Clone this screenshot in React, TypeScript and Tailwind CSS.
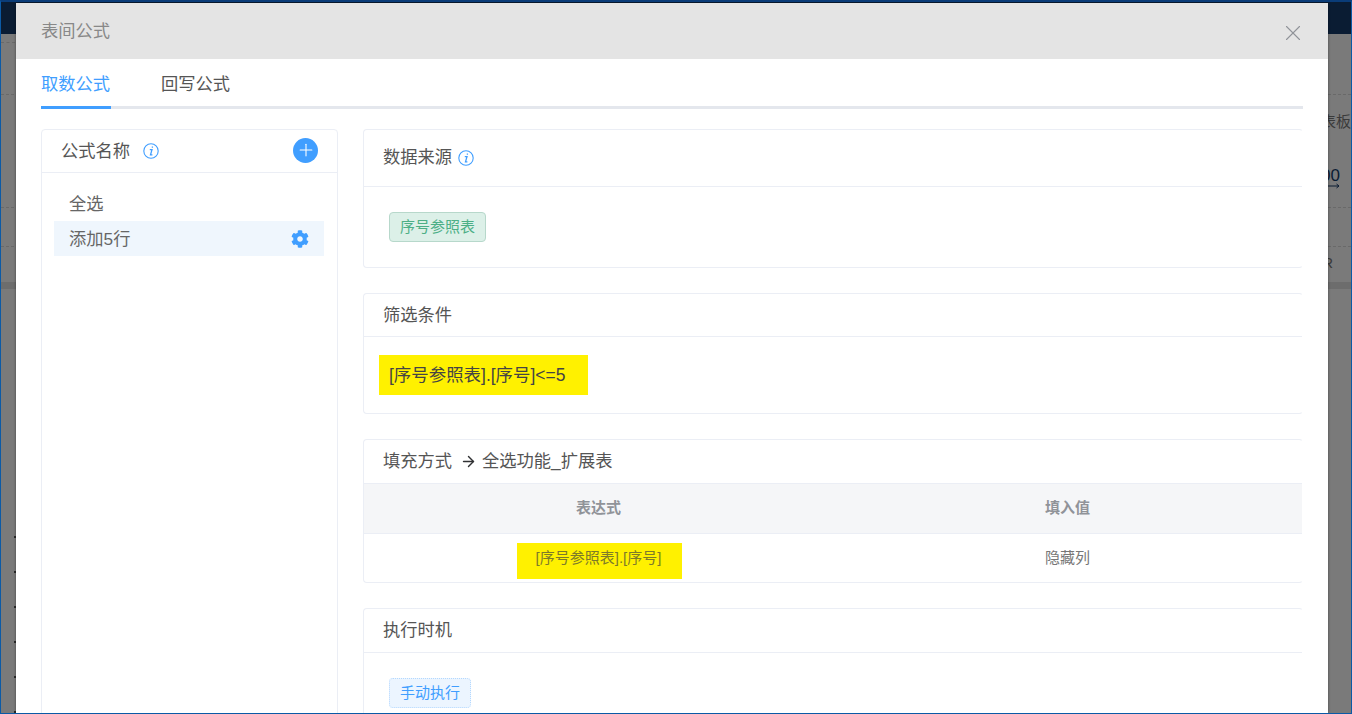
import { ArrowRight, Plus, X } from "lucide-react"
import { FaCog } from "react-icons/fa"

const font = "font-['Liberation_Sans','Noto_Sans_CJK_SC',sans-serif]"

function InfoIcon({ size = 16 }: { size?: number }) {
  return (
    <svg width={size} height={size} viewBox="0 0 16 16" fill="none" stroke="#409eff">
      <circle cx="8" cy="8" r="7.2" strokeWidth="1.1" />
      <path d="M9.4 3.4v1.4M6.8 6.6h2.2l-1.5 5.2h1.9" strokeWidth="1.3" />
    </svg>
  )
}

function Card({ title, children }: { title: React.ReactNode; children: React.ReactNode }) {
  return (
    <div className="rounded-[4px] border border-[#ebeef5] border-r-transparent bg-white">
      {title}
      {children}
    </div>
  )
}

export default function App() {
  return (
    <div className={`relative h-screen w-full overflow-hidden border-x border-b border-t-2 border-x-[#0b5aa6] border-b-[#0b5aa6] border-t-[#0a3c78] bg-[#7a7a7a] ${font}`}>
      {/* page behind the dialog */}
      <div className="h-[32px] bg-[#0a1c33]" />
      <div className="h-[61px] border-b border-dashed border-[#696969]">
        <div className="h-[9px] w-[14px] border-b border-dashed border-[#696969]" />
      </div>
      <div className="flex h-[113px] flex-col items-end border-b border-dashed border-[#696969] pt-[19px]">
        <div className="h-[16px] text-[15px] leading-[16px] text-[#3a3a3a]">表板</div>
        <div className="mr-[11px] mt-[39px] h-[14px] text-[17px] leading-[14px] text-[#0a1c33]">00</div>
        <svg width="12" height="6" viewBox="0 0 12 6" className="mr-[11px]" fill="none" stroke="#0a1c33">
          <path d="M0 3h11M8.5 1l2.5 2-2.5 2" />
        </svg>
      </div>
      <div className="h-[39px] border-b border-dashed border-[#696969]" />
      <div className="h-[35px] pr-[18px] pt-[7px] text-right text-[15px] leading-[18px] text-[#3a3a3a]">R</div>
      <div className="h-[7px] bg-[#6d6d6d]" />
      <div className="ml-[13px] mt-[247px] flex flex-col gap-[33px]">
        {[0, 1, 2, 3, 4, 5].map((i) => (
          <div key={i} className="h-[2px] w-[2px] bg-[#2b2b2b]" />
        ))}
      </div>

      {/* dialog */}
      <div className="absolute left-[15px] top-[1px] bottom-0 w-[1312px] rounded-t-[2px] bg-white shadow-[0_0_3px_rgba(0,0,0,0.45)]">
        <div className="flex h-[56px] items-center justify-between bg-[#e4e4e4] pl-[25px] pr-[22px] text-[17.28px] text-[#888]">
          <span className="mt-[2px]">表间公式</span>
          <X size={26} strokeWidth={1} color="#909399" className="mt-[4px]" />
        </div>

        <div className="px-[25px]">
          <div className="flex h-[50px] border-b-[3px] border-[#e4e7ed] text-[17.28px] leading-[50px] text-[#555]">
            <div className="h-[50px] w-[70px] border-b-[3px] border-[#409eff] text-[#409eff]">取数公式</div>
            <div className="ml-[50px]">回写公式</div>
          </div>

          <div className="mt-[20px] flex gap-[25px]">
            {/* formula list */}
            <div className="h-[700px] w-[297px] shrink-0 rounded-[4px] border border-[#ebeef5]">
              <div className="flex h-[43px] items-center justify-between border-b border-[#ebeef5] pl-[19px] pr-[19px] text-[17.28px] text-[#555]">
                <span className="flex items-center gap-[13px]">
                  <span className="mt-[2px]">公式名称</span>
                  <InfoIcon />
                </span>
                <span className="mb-[2px] flex h-[25px] w-[25px] items-center justify-center rounded-full bg-[#409eff]">
                  <Plus size={20} strokeWidth={1.3} color="#fff" />
                </span>
              </div>
              <div className="pl-[12px] pr-[13px] pt-[13px] text-[17.28px] text-[#666]">
                <div className="h-[35px] pl-[15px] leading-[37px]">全选</div>
                <div className="flex h-[35px] items-center justify-between bg-[#eff6fd] pl-[15px] pr-[15px] pt-[1px]">
                  <span className="mt-[1px]">添加5行</span>
                  <FaCog size={18} color="#409eff" />
                </div>
              </div>
            </div>

            <div className="flex flex-1 flex-col gap-[25px]">
              <Card title={<div className="flex h-[57px] items-center gap-[6px] border-b border-[#ebeef5] pl-[19px] text-[17.28px] text-[#555]">数据来源 <InfoIcon /></div>}>
                <div className="h-[80px] pl-[25px] pt-[25px]">
                  <span className="inline-block h-[30px] w-[97px] rounded-[4px] border border-[#b7d8cb] bg-[#dcf0e8] text-center text-[15px] leading-[28px] text-[#4caf86]">序号参照表</span>
                </div>
              </Card>

              <Card title={<div className="flex h-[43px] items-center border-b border-[#ebeef5] pl-[19px] pt-[2px] text-[17.28px] text-[#555]">筛选条件</div>}>
                <div className="h-[76px] pl-[15px] pt-[18px]">
                  <div className="h-[40px] w-[209px] bg-[#fff100] pl-[10px] text-[17.45px] leading-[40px] text-[#444]">[序号参照表].[序号]&lt;=5</div>
                </div>
              </Card>

              <Card title={
                <div className="flex h-[44px] items-center border-b border-[#ebeef5] pl-[19px] text-[17.28px] text-[#555]">
                  填充方式
                  <ArrowRight size={17} strokeWidth={2} color="#303133" className="ml-[8px] mr-[5px]" />
                  全选功能_扩展表
                </div>
              }>
                <div className="grid grid-cols-2 text-[15px] text-[#909399]">
                  <div className="h-[50px] border-b border-[#ebeef5] bg-[#f5f6f8] text-center font-bold leading-[48px]">表达式</div>
                  <div className="h-[50px] border-b border-[#ebeef5] bg-[#f5f6f8] text-center font-bold leading-[48px]">填入值</div>
                  <div className="flex h-[48px] justify-center pl-[2px] pt-[9px]">
                    <span className="h-[36px] w-[165px] bg-[#fff100] pr-[2px] text-center leading-[30px] text-[#7d7a2a]">[序号参照表].[序号]</span>
                  </div>
                  <div className="h-[48px] text-center leading-[48px] text-[#777]">隐藏列</div>
                </div>
              </Card>

              <Card title={<div className="flex h-[44px] items-center border-b border-[#ebeef5] pl-[19px] text-[17.28px] text-[#555]">执行时机</div>}>
                <div className="h-[80px] pl-[25px] pt-[25px]">
                  <span className="inline-block h-[30px] w-[82px] rounded-[4px] border border-dotted border-[#b3d8ff] bg-[#ecf5ff] text-center text-[15px] leading-[28px] text-[#409eff]">手动执行</span>
                </div>
              </Card>
            </div>
          </div>
        </div>
      </div>
    </div>
  )
}
